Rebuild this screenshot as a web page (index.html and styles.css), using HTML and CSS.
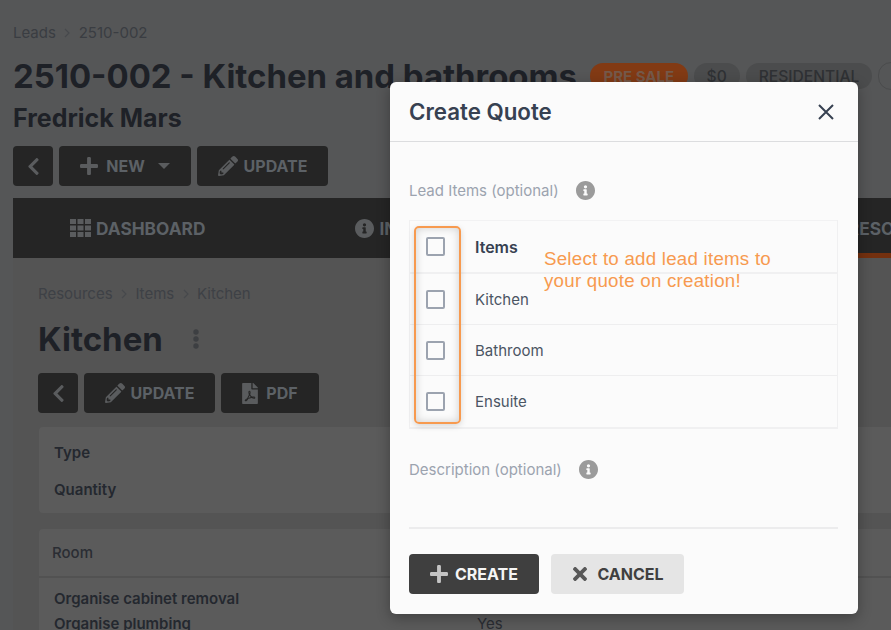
FILE: index.html
```html
<!DOCTYPE html>
<html lang="en">
<head>
    <meta charset="UTF-8">
    <title>Create Quote</title>
    <link rel="stylesheet" href="styles.css">
</head>
<body>

<svg class="icon-defs">
    <symbol id="i-chevron" viewBox="27 37 266 438"><path d="M34.52 239.03L228.87 44.69c9.37-9.37 24.57-9.37 33.94 0l22.67 22.67c9.36 9.36 9.37 24.52.04 33.9L131.49 256l154.02 154.75c9.34 9.38 9.32 24.54-.04 33.9l-22.67 22.67c-9.37 9.37-24.57 9.37-33.94 0L34.52 272.97c-9.37-9.37-9.37-24.57 0-33.94z"/></symbol>
    <symbol id="i-plus" viewBox="0 32 448 448"><path d="M416 208H272V64c0-17.67-14.33-32-32-32h-32c-17.67 0-32 14.33-32 32v144H32c-17.67 0-32 14.33-32 32v32c0 17.67 14.33 32 32 32h144v144c0 17.67 14.33 32 32 32h32c17.67 0 32-14.33 32-32V304h144c17.67 0 32-14.33 32-32v-32c0-17.67-14.33-32-32-32z"/></symbol>
    <symbol id="i-times" viewBox="0 80 352 352"><path d="M242.72 256l100.07-100.07c12.28-12.28 12.28-32.19 0-44.48l-22.24-22.24c-12.28-12.28-32.19-12.28-44.48 0L176 189.28 75.93 89.21c-12.28-12.28-32.19-12.28-44.48 0L9.21 111.45c-12.28 12.28-12.28 32.19 0 44.48L109.28 256 9.21 356.07c-12.28 12.28-12.28 32.19 0 44.48l22.24 22.24c12.28 12.28 32.2 12.28 44.48 0L176 322.72l100.07 100.07c12.28 12.28 32.2 12.28 44.48 0l22.24-22.24c12.28-12.28 12.28-32.19 0-44.48L242.72 256z"/></symbol>
    <symbol id="i-pencil" viewBox="0 0 512 512"><path d="M497.9 142.1l-46.1 46.1c-4.7 4.7-12.3 4.7-17 0l-111-111c-4.7-4.7-4.7-12.3 0-17l46.1-46.1c18.7-18.7 49.1-18.7 67.9 0l60.1 60.1c18.8 18.7 18.8 49.1 0 67.9zM284.2 99.8L21.6 362.4.4 483.9c-2.9 16.4 11.4 30.6 27.8 27.8l121.5-21.3 262.6-262.6c4.7-4.7 4.7-12.3 0-17l-111-111c-4.8-4.7-12.4-4.7-17.1 0zM124.1 339.9c-5.5-5.5-5.5-14.3 0-19.8l154-154c5.5-5.5 14.3-5.5 19.8 0s5.5 14.3 0 19.8l-154 154c-5.5 5.5-14.3 5.5-19.8 0zM88 424h48v36.3l-64.5 11.3-31.1-31.1L51.7 376H88v48z"/></symbol>
    <symbol id="i-info" viewBox="8 8 496 496"><path d="M256 8C119.043 8 8 119.083 8 256c0 136.997 111.043 248 248 248s248-111.003 248-248C504 119.083 392.957 8 256 8zm0 110c23.196 0 42 18.804 42 42s-18.804 42-42 42-42-18.804-42-42 18.804-42 42-42zm56 254c0 6.627-5.373 12-12 12h-88c-6.627 0-12-5.373-12-12v-24c0-6.627 5.373-12 12-12h12v-64h-12c-6.627 0-12-5.373-12-12v-24c0-6.627 5.373-12 12-12h64c6.627 0 12 5.373 12 12v100h12c6.627 0 12 5.373 12 12v24z"/></symbol>
    <symbol id="i-pdf" viewBox="0 0 384 512"><path d="M181.9 256.1c-5-16-4.9-46.9-2-46.9 8.4 0 7.6 36.9 2 46.9zm-1.7 47.2c-7.7 20.2-17.3 43.3-28.4 62.7 18.3-7 39-17.2 62.9-21.9-12.7-9.6-24.9-23.4-34.5-40.8zM86.1 428.1c0 .8 13.2-5.4 34.9-40.2-6.7 6.3-29.1 24.5-34.9 40.2zM248 160h136v328c0 13.3-10.7 24-24 24H24c-13.3 0-24-10.7-24-24V24C0 10.7 10.7 0 24 0h200v136c0 13.2 10.8 24 24 24zm-8 171.8c-20-12.2-33.3-29-42.7-53.8 4.5-18.5 11.6-46.6 6.2-64.2-4.7-29.4-42.4-26.5-47.8-6.8-5 18.3-.4 44.1 8.1 77-11.6 27.6-28.7 64.6-40.8 85.8-.1 0-.1.1-.2.1-27.1 13.9-73.6 44.5-54.5 68 5.6 6.9 16 10 21.5 10 17.9 0 35.7-18 61.1-61.8 25.8-8.5 54.1-19.1 79-23.2 21.7 11.8 47.1 19.5 64 19.5 29.2 0 31.2-32 19.7-43.4-13.9-13.6-54.3-9.7-73.6-7.2zM377 105L279 7c-4.5-4.5-10.6-7-17-7h-6v128h128v-6.1c0-6.3-2.5-12.4-7-16.9zm-74.1 255.3c4.1-2.7-2.5-11.9-42.8-9 37.1 15.8 42.8 9 42.8 9z"/></symbol>
</svg>

<div class="page">
    <div class="crumbs">
        <span>Leads</span>
        <svg class="crumb-sep" viewBox="0 0 8 12"><path d="M2 2l4 4-4 4"/></svg>
        <span>2510-002</span>
    </div>

    <div class="title-row">
        <h1 class="title">2510-002 - Kitchen and bathrooms</h1>
        <span class="pill pill-orange">PRE SALE</span>
        <span class="pill">$0</span>
        <span class="pill">RESIDENTIAL</span>
        <span class="pill pill-outline">&nbsp;</span>
    </div>
    <h2 class="client">Fredrick Mars</h2>

    <div class="btn-row">
        <button class="btn btn-square">
            <svg class="icon icon-chevron"><use href="#i-chevron"/></svg>
        </button>
        <button class="btn btn-new">
            <svg class="icon"><use href="#i-plus"/></svg>
            NEW
            <svg class="caret" viewBox="0 0 12 7"><path d="M0 0h12L6 6z"/></svg>
        </button>
        <button class="btn btn-update">
            <svg class="icon icon-pencil"><use href="#i-pencil"/></svg>
            UPDATE
        </button>
    </div>

    <div class="tabs">
        <div class="tab tab-dashboard">
            <svg class="icon icon-grid" viewBox="0 0 21 18"><path d="M0 0h6v5H0zM7.500 0h6v5h-6zM15 0h6v5h-6zM0 6.500h6v5H0zM7.500 6.500h6v5h-6zM15 6.500h6v5h-6zM0 13h6v5H0zM7.500 13h6v5h-6zM15 13h6v5h-6z"/></svg>
            DASHBOARD
        </div>
        <div class="tab tab-info">
            <svg class="icon icon-info"><use href="#i-info"/></svg>
            INFO
        </div>
        <div class="tab tab-resources">RESOURCES</div>
    </div>

    <div class="panel">
        <div class="crumbs crumbs-inner">
            <span>Resources</span>
            <svg class="crumb-sep" viewBox="0 0 8 12"><path d="M2 2l4 4-4 4"/></svg>
            <span>Items</span>
            <svg class="crumb-sep" viewBox="0 0 8 12"><path d="M2 2l4 4-4 4"/></svg>
            <span>Kitchen</span>
        </div>

        <div class="item-head">
            <h2 class="item-title">Kitchen</h2>
            <svg class="dots" viewBox="0 0 6 20"><circle cx="3" cy="3" r="2.700"/><circle cx="3" cy="10" r="2.700"/><circle cx="3" cy="17" r="2.700"/></svg>
        </div>

        <div class="btn-row">
            <button class="btn btn-square">
                <svg class="icon icon-chevron"><use href="#i-chevron"/></svg>
            </button>
            <button class="btn btn-update">
                <svg class="icon icon-pencil"><use href="#i-pencil"/></svg>
                UPDATE
            </button>
            <button class="btn btn-pdf">
                <svg class="icon icon-pdf"><use href="#i-pdf"/></svg>
                PDF
            </button>
        </div>

        <div class="card card-details">
            <div class="detail-label">Type</div>
            <div class="detail-label">Quantity</div>
        </div>

        <div class="card card-room">
            <div class="room-head">Room</div>
            <div class="room-body">
                <div class="detail-label">Organise cabinet removal</div>
                <div class="room-row">
                    <span class="detail-label">Organise plumbing</span>
                    <span class="room-value">Yes</span>
                </div>
            </div>
        </div>
    </div>
</div>

<div class="modal">
    <div class="modal-head">
        <span class="modal-title">Create Quote</span>
        <svg class="modal-close" viewBox="0 0 18 18"><path d="M2 2l14 14M16 2L2 16"/></svg>
    </div>

    <div class="modal-body">
        <div class="field-label">
            Lead Items (optional)
            <svg class="info"><use href="#i-info"/></svg>
        </div>

        <div class="items-table">
            <div class="items-row items-row-head">
                <span class="check"></span>
                <span>Items</span>
            </div>
            <div class="items-row">
                <span class="check"></span>
                <span>Kitchen</span>
            </div>
            <div class="items-row">
                <span class="check"></span>
                <span>Bathroom</span>
            </div>
            <div class="items-row items-row-last">
                <span class="check"></span>
                <span>Ensuite</span>
            </div>
            <div class="highlight"></div>
            <div class="hint">Select to add lead items to<br>your quote on creation!</div>
        </div>

        <div class="field-label field-label-desc">
            Description (optional)
            <svg class="info"><use href="#i-info"/></svg>
        </div>
        <div class="desc-line"></div>

        <div class="modal-actions">
            <button class="btn btn-create">
                <svg class="icon"><use href="#i-plus"/></svg>
                CREATE
            </button>
            <button class="btn btn-cancel">
                <svg class="icon"><use href="#i-times"/></svg>
                CANCEL
            </button>
        </div>
    </div>
</div>

</body>
</html>
```

FILE: styles.css
```css
html, body {
    height: 100%;
    margin: 0;
    padding: 0;
}

body {
    background-color: #555657;
    font-family: 'Inter', sans-serif;
    overflow: hidden;
}

button {
    font-family: inherit;
}

.icon-defs {
    display: none;
}

.page {
    padding: 23px 0 0 13px;
    width: 1100px;
    color: #1e2127;
}

.crumbs {
    display: flex;
    align-items: center;
    gap: 7.4px;
    height: 19px;
    font-size: 15px;
    color: #3a3d42;
}

.crumb-sep {
    width: 8px;
    height: 12px;
    fill: none;
    stroke: #47494d;
    stroke-width: 1.2;
}

.title-row {
    display: flex;
    align-items: center;
    gap: 6px;
    margin-top: 14px;
    height: 40px;
}

.title {
    margin: 0 7px 0 0;
    font-size: 32.9px;
    font-weight: 700;
    line-height: 40px;
    white-space: nowrap;
}

.pill {
    display: flex;
    align-items: center;
    height: 26px;
    padding: 0 13px;
    border-radius: 13px;
    background-color: #4b4c4d;
    color: #2f3134;
    font-size: 15.6px;
    font-weight: 500;
}

.pill-orange {
    padding: 0 13.5px;
    background-color: #823a14;
    color: #75594a;
    font-size: 15px;
    font-weight: 700;
}

.pill-outline {
    background: none;
    border: 1px solid #4a4b4c;
}

.client {
    margin: 6px 0 0;
    font-size: 25px;
    font-weight: 700;
    line-height: 32px;
}

.btn-row {
    display: flex;
    gap: 6px;
    margin-top: 12px;
}

.btn {
    display: flex;
    align-items: center;
    justify-content: center;
    height: 40px;
    padding: 0;
    border: 0;
    border-radius: 4px;
    background-color: #252525;
    color: #5c6166;
    font-size: 16px;
    font-weight: 700;
}

.icon {
    fill: #5a5c5e;
    width: 18px;
    height: 18px;
}

.btn-square {
    width: 40px;
}

.icon-chevron {
    width: 11px;
    height: 17px;
}

.btn-new {
    width: 132px;
    gap: 8px;
}

.btn-update {
    width: 131px;
    gap: 6px;
}

.icon-pencil {
    width: 20px;
    height: 20px;
}

.caret {
    width: 12px;
    height: 7px;
    margin-left: 5px;
    fill: #5a5c5e;
}

.btn-pdf {
    width: 98px;
    gap: 8px;
}

.icon-pdf {
    width: 16px;
    height: 21px;
}

.tabs {
    display: flex;
    align-items: center;
    height: 60px;
    margin-top: 12px;
    background-color: #252525;
    color: #5c6166;
    font-size: 17.3px;
    font-weight: 700;
}

.tab {
    display: flex;
    align-items: center;
    gap: 5px;
}

.tab-dashboard {
    margin-left: 57px;
}

.icon-grid {
    width: 21px;
    height: 18px;
}

.tab-info {
    margin-left: 150px;
}

.icon-info {
    width: 19px;
    height: 19px;
}

.tab-resources {
    margin-left: 387px;
    height: 60px;
    padding: 5px 40px 0;
    box-sizing: border-box;
    border-bottom: 5px solid #73300f;
}

.panel {
    padding: 26px 0 0 25px;
    background-color: #545454;
    height: 346px;
}

.crumbs-inner {
    color: #3e4146;
}

.item-head {
    display: flex;
    align-items: center;
    gap: 30px;
    margin-top: 16px;
    height: 40px;
}

.item-title {
    margin: 0;
    font-size: 33px;
    font-weight: 700;
    line-height: 40px;
}

.dots {
    width: 6px;
    height: 20px;
    fill: #3d3f42;
}

.panel .btn-row {
    margin-top: 14px;
}

.card {
    margin-left: 1px;
    background-color: #5b5b5b;
    border-radius: 4px;
    font-size: 15px;
    line-height: 18px;
}

.card-details {
    margin-top: 14px;
    padding: 17px 15px 14px;
}

.detail-label {
    font-weight: 600;
    color: #24282f;
}

.card-details .detail-label + .detail-label {
    margin-top: 19px;
}

.card-room {
    margin-top: 16px;
}

.room-head {
    display: flex;
    align-items: center;
    height: 47px;
    padding-left: 13px;
    font-weight: 500;
    color: #2a2d33;
    border-bottom: 2px solid #525252;
}

.room-body {
    padding: 12px 15px 0;
}

.room-row {
    display: grid;
    grid-template-columns: 423px 1fr;
    margin-top: 7px;
}

.room-value {
    color: #2a2d33;
}

.modal {
    position: absolute;
    left: 390px;
    top: 82px;
    width: 468px;
    height: 532px;
    background-color: #fbfbfb;
    border-radius: 6px;
    box-shadow: 0 4px 14px rgba(0, 0, 0, 0.3);
    color: #374151;
}

.modal-head {
    display: flex;
    align-items: center;
    justify-content: space-between;
    height: 59px;
    padding: 0 23px 0 19px;
    border-bottom: 1px solid #dcdddf;
}

.modal-title {
    font-size: 22.3px;
    font-weight: 600;
}

.modal-close {
    width: 18px;
    height: 18px;
    fill: none;
    stroke: #374151;
    stroke-width: 2;
}

.modal-body {
    padding: 0 20px 0 19px;
}

.field-label {
    display: flex;
    align-items: center;
    gap: 17px;
    margin-top: 38px;
    height: 20px;
    font-size: 15px;
    color: #9ca3af;
}

.info {
    width: 19px;
    height: 19px;
    fill: #9b9b9b;
}

.items-table {
    position: relative;
    margin-top: 20px;
    border: 1px solid #f0f0f1;
    border-top: 0;
    border-bottom-width: 2px;
    font-size: 15px;
    color: #4b5563;
}

.items-row {
    display: flex;
    align-items: center;
    gap: 30px;
    height: 50px;
    padding-left: 16px;
    border-bottom: 1px solid #eeeeef;
}

.items-row-last {
    border-bottom: 0;
    height: 51px;
}

.items-row-head {
    height: 51px;
    font-size: 16px;
    font-weight: 600;
    color: #374151;
    border-top: 1px solid #f2f2f3;
    border-bottom: 2px solid #f0f0f1;
}

.check {
    width: 15px;
    height: 15px;
    border: 2px solid #9ca3af;
    border-radius: 2px;
}

.highlight {
    position: absolute;
    left: 4px;
    top: 6px;
    width: 43px;
    height: 194px;
    border: 2px solid #f79a4f;
    border-radius: 5px;
    box-shadow: inset 0 0 8px rgba(0, 0, 0, 0.18), 0 2px 6px rgba(0, 0, 0, 0.15);
}

.hint {
    position: absolute;
    left: 134px;
    top: 28px;
    font-family: 'Liberation Sans', sans-serif;
    font-size: 18.7px;
    letter-spacing: 0.25px;
    line-height: 22px;
    color: #f79a4f;
}

.field-label-desc {
    margin-top: 30px;
}

.desc-line {
    margin-top: 48px;
    border-bottom: 2px solid #ececed;
}

.modal-actions {
    display: flex;
    gap: 12px;
    margin-top: 25px;
}

.btn-create {
    width: 130px;
    gap: 7px;
    background-color: #3f3f3f;
    color: #f5f5f5;
}

.btn-create .icon {
    fill: #c4c4c4;
}

.btn-cancel {
    width: 133px;
    padding-left: 2px;
    gap: 10px;
    background-color: #e5e5e5;
    color: #404040;
}

.btn-cancel .icon {
    fill: #595959;
    width: 14px;
    height: 14px;
}
```
